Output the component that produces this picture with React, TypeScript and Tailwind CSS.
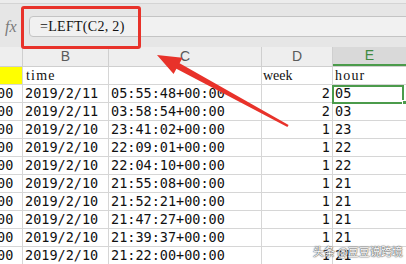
const rows = [
  ["2019/2/11", "05:55:48+00:00", "2", "05"],
  ["2019/2/11", "03:58:54+00:00", "2", "03"],
  ["2019/2/10", "23:41:02+00:00", "1", "23"],
  ["2019/2/10", "22:09:01+00:00", "1", "22"],
  ["2019/2/10", "22:04:10+00:00", "1", "22"],
  ["2019/2/10", "21:55:08+00:00", "1", "21"],
  ["2019/2/10", "21:52:21+00:00", "1", "21"],
  ["2019/2/10", "21:47:27+00:00", "1", "21"],
  ["2019/2/10", "21:39:37+00:00", "1", "21"],
  ["2019/2/10", "21:22:00+00:00", "1", "21"],
];

const mono = "font-['DejaVu_Sans_Mono',monospace] text-[13.5px] text-[#111]";
const label = "font-['Liberation_Serif',serif] text-[14px] text-[#111]";
const line = "border-[#d6d6d6]";

function ColHeader() {
  return (
    <div className="flex h-[20px] bg-[#eeeeee] border-b border-[#cfcfcf] font-['Liberation_Sans',sans-serif] text-[14px] text-[#5a5a5a]">
      <div className="w-[23px] border-r border-[#cfcfcf]" />
      <div className="w-[86px] border-r border-[#cfcfcf] flex items-center justify-center">B</div>
      <div className="w-[153px] border-r border-[#cfcfcf] flex items-center justify-center">C</div>
      <div className="w-[71px] border-r border-[#cfcfcf] flex items-center justify-center">D</div>
      <div className="flex-1 bg-[#d9d9d9] border-b-2 border-[#4b9b4b] flex items-center justify-center text-[#3f8a3f]">
        E
      </div>
    </div>
  );
}

export default function App() {
  return (
    <div className="relative w-[406px] h-[264px] overflow-hidden bg-white">
      {/* formula bar */}
      <div className="h-[47px] bg-[#e6e6e6] flex flex-col">
        <div className="h-[4px] bg-[#ececec] border-b border-[#d4d4d4]" />
        <div className="mt-[12px] flex items-center h-[21px]">
          <span className="w-[29px] pl-[5px] font-['Liberation_Serif',serif] italic text-[16px] text-[#7a7a7a]">
            fx
          </span>
          <div className="flex-1 -mr-[10px] h-[21px] rounded-[4px] border border-[#c4c4c4] bg-[#f1f1f1] flex items-center pl-[10px] font-['Liberation_Serif',serif] text-[14px] tracking-[0.3px] text-[#111]">
            =LEFT(C2, 2)
          </div>
        </div>
      </div>

      <ColHeader />

      {/* header row */}
      <div className={`flex h-[18px] border-b ${line}`}>
        <div className={`w-[23px] border-r ${line} bg-[#ffff00]`} />
        <div className={`w-[86px] border-r ${line} pl-[3px] flex items-center tracking-[1.2px] ${label}`}>time</div>
        <div className={`w-[153px] border-r ${line}`} />
        <div className={`w-[71px] border-r ${line} pl-[1px] flex items-center ${label}`}>week</div>
        <div className={`flex-1 pl-[2px] flex items-center tracking-[1.2px] ${label}`}>hour</div>
      </div>

      {rows.map((r, i) => (
        <div key={i} className={`flex h-[18px] border-b ${line} ${mono}`}>
          <div className={`w-[23px] border-r ${line} overflow-hidden flex items-center`}>
            <span className="-ml-[3px]">00</span>
          </div>
          <div className={`w-[86px] border-r ${line} pl-[2px] flex items-center`}>{r[0]}</div>
          <div className={`w-[153px] border-r ${line} pl-[2px] flex items-center`}>{r[1]}</div>
          <div className={`w-[71px] border-r ${line} pr-[2px] flex items-center justify-end`}>{r[2]}</div>
          <div className="relative flex-1 pl-[2px] flex items-center">
            {r[3]}
            {i === 0 && (
              <>
                <span className="absolute -left-[1px] top-0 w-[72px] h-[19px] border-2 border-[#4b9b4b]" />
                <span className="absolute left-[69px] top-[15px] w-[5px] h-[5px] bg-[#4b9b4b] border border-white" />
              </>
            )}
          </div>
        </div>
      ))}

      {/* red highlight box */}
      <div className="absolute left-[21px] top-[6px] w-[120px] h-[43px] border-[3px] border-[#e8322a] rounded-[3px]" />

      {/* red arrow */}
      <svg className="absolute left-0 top-0 pointer-events-none" width="406" height="264" viewBox="0 0 406 264">
        <polygon fill="#e8322a" points="157,55 182.5,57.8 179.6,63.3 288.6,125 287.4,127 176.4,68.7 173.6,74" />
      </svg>

      {/* watermark */}
      <div className="absolute left-[313px] top-[243px] font-['Noto_Sans_CJK_SC',sans-serif] text-[11px] text-white [text-shadow:0_0_1px_#555,0_0_1px_#555,0_0_2px_#777]">
        头条 @豆豆说跨境
      </div>
    </div>
  );
}
